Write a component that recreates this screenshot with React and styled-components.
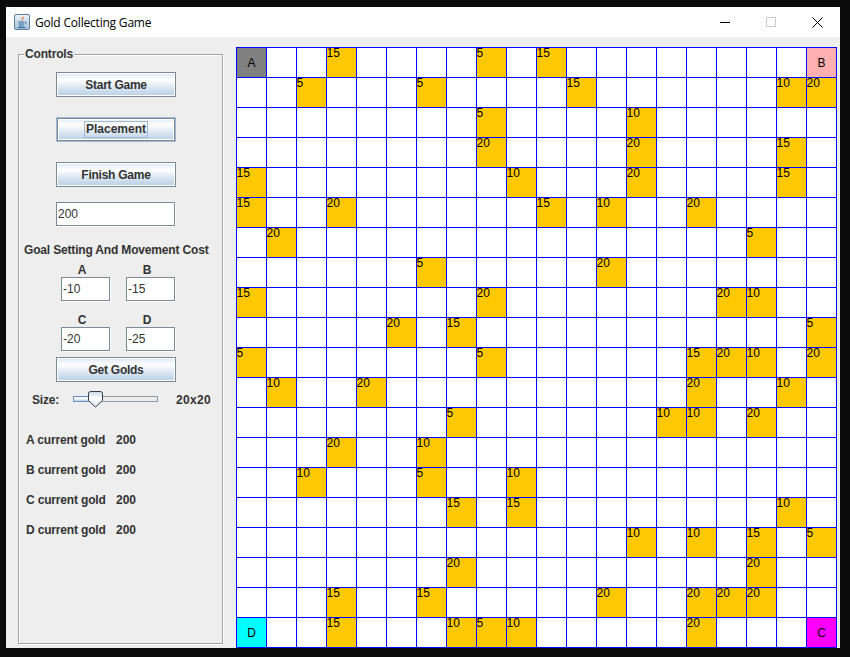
import React from 'react'
import styled, { createGlobalStyle } from 'styled-components'

const GlobalStyle = createGlobalStyle`
  html, body {
    margin: 0;
    padding: 0;
    height: 100%;
    background: #0b0b0b;
    overflow: hidden;
  }
`

// [row, col, value] for every gold cell on the board
const GOLDS = [
  [0, 3, 15], [0, 8, 5], [0, 10, 15],
  [1, 2, 5], [1, 6, 5], [1, 11, 15], [1, 18, 10], [1, 19, 20],
  [2, 8, 5], [2, 13, 10],
  [3, 8, 20], [3, 13, 20], [3, 18, 15],
  [4, 0, 15], [4, 9, 10], [4, 13, 20], [4, 18, 15],
  [5, 0, 15], [5, 3, 20], [5, 10, 15], [5, 12, 10], [5, 15, 20],
  [6, 1, 20], [6, 17, 5],
  [7, 6, 5], [7, 12, 20],
  [8, 0, 15], [8, 8, 20], [8, 16, 20], [8, 17, 10],
  [9, 5, 20], [9, 7, 15], [9, 19, 5],
  [10, 0, 5], [10, 8, 5], [10, 15, 15], [10, 16, 20], [10, 17, 10], [10, 19, 20],
  [11, 1, 10], [11, 4, 20], [11, 15, 20], [11, 18, 10],
  [12, 7, 5], [12, 14, 10], [12, 15, 10], [12, 17, 20],
  [13, 3, 20], [13, 6, 10],
  [14, 2, 10], [14, 6, 5], [14, 9, 10],
  [15, 7, 15], [15, 9, 15], [15, 18, 10],
  [16, 13, 10], [16, 15, 10], [16, 17, 15], [16, 19, 5],
  [17, 7, 20], [17, 17, 20],
  [18, 3, 15], [18, 6, 15], [18, 12, 20], [18, 15, 20], [18, 16, 20], [18, 17, 20],
  [19, 3, 15], [19, 7, 10], [19, 8, 5], [19, 9, 10], [19, 15, 20],
]

const PLAYERS = { '0,0': 'A', '0,19': 'B', '19,19': 'C', '19,0': 'D' }
const PLAYER_COLORS = { A: '#808080', B: '#ffafaf', C: '#ff00ff', D: '#00ffff' }

const Frame = styled.div`
  box-sizing: border-box;
  width: 834px;
  height: 641px;
  margin: 7px 0 0 6px;
  background: #eeeeee;
  display: flex;
  flex-direction: column;
`

const TitleBar = styled.header`
  height: 30px;
  flex: none;
  background: #ffffff;
  display: flex;
  align-items: center;
  padding-left: 8px;
`

const Title = styled.span`
  margin-left: 5px;
  font: 12px "Open Sans", "Noto Sans", sans-serif;
  letter-spacing: -0.2px;
  color: #000000;
`

const WindowControls = styled.div`
  margin-left: auto;
  display: flex;
`

const WindowButton = styled.div`
  width: 46px;
  height: 30px;
  display: flex;
  align-items: center;
  justify-content: center;
`

const Content = styled.main`
  flex: 1;
  display: flex;
  align-items: flex-start;
  padding: 10px 0 0 12px;
`

const Panel = styled.section`
  position: relative;
  box-sizing: border-box;
  width: 205px;
  height: 590px;
  margin-top: 7px;
  padding-top: 17px;
  border: 1px solid #a3a3a3;
  box-shadow: inset 1px 1px 0 #ffffff, 1px 1px 0 #ffffff;
  display: flex;
  flex-direction: column;
  align-items: flex-start;
  font: bold 12px "Liberation Sans", Arial, sans-serif;
  letter-spacing: -0.17px;
  color: #333333;
`

const PanelTitle = styled.span`
  position: absolute;
  top: -8px;
  left: 5px;
  padding: 0 1px;
  background: #eeeeee;
  line-height: 15px;
`

const Button = styled.button`
  box-sizing: border-box;
  width: 120px;
  height: 25px;
  margin: ${p => p.$top || 0}px 0 0 37px;
  padding: 0;
  border: 1px solid ${p => (p.$focused ? '#a3b8cc' : '#7a8a99')};
  box-shadow: ${p => (p.$focused ? 'inset 0 0 0 1px #7a8a99, inset 0 0 0 2px #ffffff' : 'inset 0 0 0 1px #ffffff')};
  background: linear-gradient(#dde8f3 0%, #ffffff 30%, #dde8f3 60%, #b8cfe5 100%);
  font: bold 12px "Liberation Sans", Arial, sans-serif;
  letter-spacing: -0.25px;
  color: #333333;
`

const FocusRing = styled.span`
  display: inline-block;
  padding: 0 1px;
  line-height: 15px;
  letter-spacing: 0;
  border: 1px solid #a3b8cc;
`

const Field = styled.input`
  box-sizing: border-box;
  display: block;
  width: ${p => p.$width}px;
  height: 24px;
  margin: ${p => p.$top || 0}px 0 0 ${p => p.$left || 0}px;
  padding: 0 0 0 1px;
  border: 1px solid #7a8a99;
  box-shadow: 1px 1px 0 #ffffff;
  outline: none;
  background: #ffffff;
  font: 12px "Liberation Sans", Arial, sans-serif;
  color: #333333;
`

const Heading = styled.div`
  margin: 16px 0 0 5px;
  line-height: 16px;
  white-space: nowrap;
`

const GoalGrid = styled.div`
  display: grid;
  grid-template-columns: 49px 49px;
  column-gap: 16px;
  row-gap: 12px;
  margin: 5px 0 0 42px;
`

const GoalLabel = styled.div`
  width: 42px;
  line-height: 14px;
  text-align: center;
`

const SizeRow = styled.div`
  display: flex;
  align-items: center;
  height: 17px;
  margin: 9px 0 0 13px;
`

const SizeLabel = styled.span`
  width: 41px;
`

const SizeValue = styled.span`
  margin-left: 17px;
  letter-spacing: 0.3px;
`

const StatusList = styled.div`
  margin: 17px 0 0 7px;
`

const StatusRow = styled.div`
  display: flex;
  align-items: center;
  height: 30px;
`

const StatusName = styled.span`
  width: 90px;
`

const StatusValue = styled.span`
  letter-spacing: 0;
`

const Board = styled.div`
  display: grid;
  grid-template-columns: repeat(20, 30px);
  grid-auto-rows: 30px;
  margin-left: 13px;
  border-top: 1px solid #0000ff;
  border-left: 1px solid #0000ff;
`

const Cell = styled.div`
  box-sizing: border-box;
  border-right: 1px solid #0000ff;
  border-bottom: 1px solid #0000ff;
  background: ${p => p.$color};
  font: 12px "Liberation Sans", Arial, sans-serif;
  color: #000000;
  line-height: 11px;
  text-indent: -0.5px;
`

const PlayerCell = styled(Cell)`
  display: flex;
  align-items: center;
  justify-content: center;
  line-height: 14px;
  text-indent: 0;
`

const JavaIcon = () => (
  <svg width="16" height="16" viewBox="0 0 16 16">
    <defs>
      <linearGradient id="javaBg" x1="0" y1="0" x2="0" y2="1">
        <stop offset="0" stopColor="#eef3f8" />
        <stop offset="1" stopColor="#a9c1d9" />
      </linearGradient>
    </defs>
    <rect x="0.5" y="0.5" width="15" height="15" rx="1.5" fill="url(#javaBg)" stroke="#5f7f9f" />
    <path d="M8.6 2.2c1 1.2-1.8 2.2-1 3.8.3.6.9.8.9.8-1-1.3 2.2-2.2 1-4.3" fill="#e8762c" />
    <path d="M4 8h6.5M4.6 10h5.4M5 12h4.6M3.6 13.6h8" stroke="#2f6da3" strokeWidth="1" fill="none" />
    <path d="M11 8.2c1.6-.3 1.8 1.4 0 1.8" stroke="#2f6da3" strokeWidth="1" fill="none" />
  </svg>
)

const SizeSlider = () => (
  <svg width="86" height="17" viewBox="0 0 86 17">
    <defs>
      <linearGradient id="trackOn" x1="0" y1="0" x2="0" y2="1">
        <stop offset="0" stopColor="#dde8f3" />
        <stop offset="0.4" stopColor="#ffffff" />
        <stop offset="1" stopColor="#a9c2da" />
      </linearGradient>
      <linearGradient id="thumbFill" x1="0" y1="0" x2="0" y2="1">
        <stop offset="0" stopColor="#c8d9ea" />
        <stop offset="0.45" stopColor="#ffffff" />
        <stop offset="1" stopColor="#d7e4f0" />
      </linearGradient>
    </defs>
    <rect x="0.5" y="5.5" width="84" height="5" fill="#ececec" stroke="#8f9aa5" />
    <rect x="0.5" y="5.5" width="16" height="5" fill="url(#trackOn)" stroke="#6f8fc0" />
    <path d="M15.5 2.5 Q15.5 0.5 17.5 0.5 H27.5 Q29.5 0.5 29.5 2.5 V9.5 L22.5 16 L15.5 9.5 Z" fill="url(#thumbFill)" stroke="#333a42" />
  </svg>
)

const App = () => {
  const golds = {}
  GOLDS.forEach(([r, c, v]) => { golds[`${r},${c}`] = v })

  const cells = []
  for (let r = 0; r < 20; r++) {
    for (let c = 0; c < 20; c++) {
      const key = `${r},${c}`
      if (PLAYERS[key]) {
        cells.push(<PlayerCell key={key} $color={PLAYER_COLORS[PLAYERS[key]]}>{PLAYERS[key]}</PlayerCell>)
      } else {
        cells.push(<Cell key={key} $color={golds[key] ? '#ffc800' : '#ffffff'}>{golds[key]}</Cell>)
      }
    }
  }

  return (
    <Frame>
      <GlobalStyle />
      <TitleBar>
        <JavaIcon />
        <Title>Gold Collecting Game</Title>
        <WindowControls>
          <WindowButton>
            <svg width="10" height="10"><path d="M0 5.5H10" stroke="#000" /></svg>
          </WindowButton>
          <WindowButton>
            <svg width="10" height="10"><rect x="0.5" y="0.5" width="9" height="9" fill="none" stroke="#cccccc" /></svg>
          </WindowButton>
          <WindowButton>
            <svg width="11" height="11"><path d="M0.5 0.5L10.5 10.5M10.5 0.5L0.5 10.5" stroke="#000" /></svg>
          </WindowButton>
        </WindowControls>
      </TitleBar>
      <Content>
        <Panel>
          <PanelTitle>Controls</PanelTitle>
          <Button>Start Game</Button>
          <Button $top={20} $focused><FocusRing>Placement</FocusRing></Button>
          <Button $top={20}>Finish Game</Button>
          <Field $width={119} $top={15} $left={37} defaultValue="200" />
          <Heading>Goal Setting And Movement Cost</Heading>
          <GoalGrid>
            {[['A', '-10'], ['B', '-15'], ['C', '-20'], ['D', '-25']].map(([name, cost]) => (
              <div key={name}>
                <GoalLabel>{name}</GoalLabel>
                <Field $width={49} defaultValue={cost} />
              </div>
            ))}
          </GoalGrid>
          <Button $top={6}>Get Golds</Button>
          <SizeRow>
            <SizeLabel>Size:</SizeLabel>
            <SizeSlider />
            <SizeValue>20x20</SizeValue>
          </SizeRow>
          <StatusList>
            {['A', 'B', 'C', 'D'].map(name => (
              <StatusRow key={name}>
                <StatusName>{name} current gold</StatusName>
                <StatusValue>200</StatusValue>
              </StatusRow>
            ))}
          </StatusList>
        </Panel>
        <Board>{cells}</Board>
      </Content>
    </Frame>
  )
}

export default App
